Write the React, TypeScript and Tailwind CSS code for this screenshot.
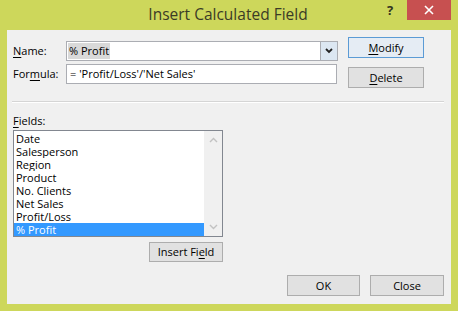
import React from "react";

const FIELDS = ["Date", "Salesperson", "Region", "Product", "No. Clients", "Net Sales", "Profit/Loss", "% Profit"];

function Btn({ children, className = "" }: { children: React.ReactNode; className?: string }) {
  return (
    <div className={`flex items-center justify-center border text-[11px] leading-[14px] text-black ${className}`}>
      {children}
    </div>
  );
}

export default function App() {
  return (
    <div
      className="w-[458px] h-[311px] bg-[#cdd75b] flex flex-col overflow-hidden"
      style={{ fontFamily: '"Open Sans", "Noto Sans", sans-serif' }}
    >
      {/* title bar */}
      <div className="h-[30px] flex items-start shrink-0">
        <div className="flex-1 pl-[69px] pt-[4px] text-center text-[15.5px] leading-[20px] text-[#3b3b26]">Insert Calculated Field</div>
        <div className="w-[20px] pt-[2px] text-[13px] leading-[16px] font-bold text-[#33331f]">?</div>
        <div className="w-[44px] h-[20px] mr-[7px] bg-[#c75050] flex items-center justify-center">
          <svg width="10" height="10" viewBox="0 0 10 10">
            <path d="M1 1 L9 9 M9 1 L1 9" stroke="white" strokeWidth="1.6" />
          </svg>
        </div>
      </div>

      {/* client area */}
      <div className="flex-1 mx-[7px] mb-[7px] bg-[#f0f0f0] flex flex-col pl-[6px] pt-[7px] pr-[7px] text-[11px] leading-[14px] text-black">
        <div className="flex">
          <div className="flex flex-col pt-[4px]">
            <div className="flex items-center h-[20px]">
              <div className="w-[53px]">
                <span className="underline underline-offset-2">N</span>ame:
              </div>
              <div className="w-[272px] h-[20px] border border-[#abadb3] bg-white flex items-center">
                <span className="ml-[1px] px-[1px] bg-[#d9d9d9] leading-[16px]">% Profit</span>
                <div className="flex-1" />
                <div className="w-[17px] h-[18px] bg-[#dce7f2] border-l border-[#abadb3] flex items-center justify-center">
                  <svg width="8" height="6" viewBox="0 0 8 6">
                    <path d="M1 1 L4 4 L7 1" stroke="#222" strokeWidth="1.8" fill="none" />
                  </svg>
                </div>
              </div>
            </div>
            <div className="flex items-center h-[20px] mt-[3px]">
              <div className="w-[53px]">
                For<span className="underline underline-offset-2">m</span>ula:
              </div>
              <div className="w-[271px] h-[20px] border border-[#abadb3] bg-white flex items-center pl-[3px]">
                = 'Profit/Loss'/'Net Sales'
              </div>
            </div>
          </div>
          <div className="flex flex-col ml-[10px] gap-[9px]">
            <Btn className="w-[76px] h-[21px] border-[#5b9bd5] bg-[#e5ecf4]">
              <span><span className="underline underline-offset-2">M</span>odify</span>
            </Btn>
            <Btn className="w-[76px] h-[21px] border-[#adadad] bg-[#e1e1e1]">
              <span><span className="underline underline-offset-2">D</span>elete</span>
            </Btn>
          </div>
        </div>

        <div className="mt-[13px] -ml-[1px] h-[1px] bg-[#d5d5d5] border-b border-white box-content" />

        <div className="mt-[10px] h-[16px] leading-[16px]">
          <span className="underline underline-offset-2">F</span>ields:
        </div>

        <div className="w-[210px] mt-[1px] flex flex-col items-end">
          <div className="w-[210px] h-[107px] border border-[#828790] bg-white flex">
            <div className="flex-1 flex flex-col pt-[1px]">
              {FIELDS.map((f, i) => (
                <div
                  key={f}
                  className={`h-[13px] leading-[13px] pl-[2px] overflow-hidden ${i === FIELDS.length - 1 ? "bg-[#3399ff] text-white" : ""}`}
                >
                  {f}
                </div>
              ))}
            </div>
            <div className="w-[18px] bg-[#f0f0f0] flex flex-col items-center justify-between py-[6px]">
              <svg width="9" height="6" viewBox="0 0 9 6">
                <path d="M1 5 L4.5 1.5 L8 5" stroke="#c2c2c2" strokeWidth="1.4" fill="none" />
              </svg>
              <svg width="9" height="6" viewBox="0 0 9 6">
                <path d="M1 1 L4.5 4.5 L8 1" stroke="#c2c2c2" strokeWidth="1.4" fill="none" />
              </svg>
            </div>
          </div>
          <Btn className="mt-[5px] w-[74px] h-[20px] border-[#adadad] bg-[#e1e1e1]">
            <span>Insert Fi<span className="underline underline-offset-2">e</span>ld</span>
          </Btn>
        </div>

        <div className="flex justify-end gap-[10px] mt-[13px]">
          <Btn className="w-[73px] h-[21px] border-[#adadad] bg-[#e1e1e1]">OK</Btn>
          <Btn className="w-[74px] h-[21px] border-[#adadad] bg-[#e1e1e1]">Close</Btn>
        </div>
      </div>
    </div>
  );
}
